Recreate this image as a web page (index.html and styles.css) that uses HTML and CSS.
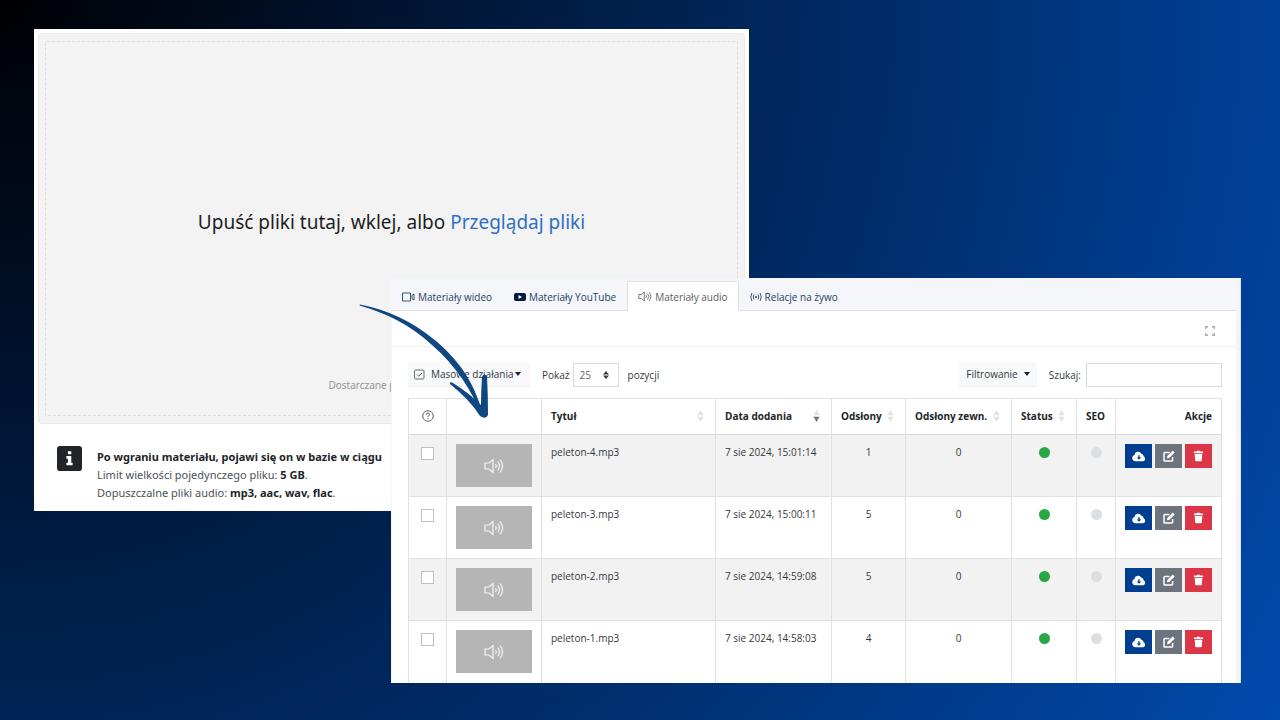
FILE: index.html
```html
<!DOCTYPE html>
<html lang="pl">
<head>
<meta charset="utf-8">
<title>Materiały audio</title>
<link rel="stylesheet" href="styles.css">
</head>
<body>
<svg class="sprite" aria-hidden="true">
  <symbol id="speaker" viewBox="0 0 20 16"><path d="M1 5h4l4-3.500v13L5 11H1zM11.500 6q1.500 2 0 4M13.800 3.700q3.200 4.300 0 8.600M16 1.500q5 6.500 0 13" fill="none" stroke="currentColor" stroke-width="1.200"/></symbol>
  <symbol id="sort" viewBox="0 0 8 14"><path class="up" d="M4 0l3.500 6h-7z"/><path class="down" d="M4 14l3.500-6h-7z"/></symbol>
  <symbol id="cloud" viewBox="0 0 16 12"><path d="M4 11.500a3.700 3.700 0 0 1-1.200-7.200A4.200 4.200 0 0 1 10.700 2.800a2.800 2.800 0 0 1 2.500 3A3 3 0 0 1 12.800 11.500z" fill="#fff"/><path d="M7.200 4.500h1.600V7h1.800L8 9.700 5.400 7h1.800z" fill="#003f8f"/></symbol>
  <symbol id="edit" viewBox="0 0 12 12"><path d="M6.500 2.500H1.800q-.8 0-.8.8v7q0 .8.8.8h7q.8 0 .8-.8V7" fill="none" stroke="#fff" stroke-width="1.500"/><path d="M4 8.300l.3-2.300L9.800.5l1.900 1.900L6.200 7.900z" fill="#fff"/></symbol>
  <symbol id="trash" viewBox="0 0 12 12"><path d="M1 1.200h3L4.600.4h2.800l.6.800h3v1.500H1zM1.800 3.500h8.400l-.6 7.500q0 .8-.9.800H3.300q-.9 0-.9-.8z" fill="#fff"/></symbol>
</svg>
<main class="stage">
  <section class="window upload">
    <div class="drop">
      <div class="drop-area">
        <p class="drop-title">Upuść pliki tutaj, wklej, albo <a href="#">Przeglądaj pliki</a></p>
        <p class="powered">Dostarczane przez <svg width="36" height="9" viewBox="0 0 36 9"><path d="M4.500 0L9 4.500H6.500V9h-4V4.500H0z" fill="#bbb"/></svg></p>
      </div>
    </div>
    <div class="note">
      <svg class="info" viewBox="0 0 24 24" aria-hidden="true"><rect width="24" height="24" rx="3" fill="#212529"/><path d="M10.500 5h3.200v3h-3.200zM9 9.700h4.700V16H15v2.500H9V16h1.500v-3.800H9z" fill="#fff"/></svg>
      <div class="note-text">
        <p><b>Po wgraniu materiału, pojawi się on w bazie w ciągu</b></p>
        <p>Limit wielkości pojedynczego pliku: <b>5 GB</b>.</p>
        <p>Dopuszczalne pliki audio: <b>mp3, aac, wav, flac</b>.</p>
      </div>
    </div>
  </section>

  <section class="window media">
    <nav class="tabs">
      <a class="tab" href="#"><svg width="13" height="10" viewBox="0 0 13 10"><path d="M.5 1h8v8h-8zM10 3.500l2-1.500v6l-2-1.500z" fill="none" stroke="currentColor" stroke-width=".9"/></svg>Materiały wideo</a>
      <a class="tab" href="#"><svg width="12" height="10" viewBox="0 0 12 10"><rect y="1" width="12" height="8" rx="2" fill="#001a44"/><path d="M4.500 3l3.500 2-3.500 2z" fill="#fff"/></svg>Materiały YouTube</a>
      <a class="tab active" href="#"><svg width="14" height="11"><use href="#speaker"/></svg>Materiały audio</a>
      <a class="tab" href="#"><svg width="12" height="10" viewBox="0 0 12 10"><path d="M2 1q-2.500 4 0 8M4 2.500q-1.500 2.500 0 5M10 1q2.500 4 0 8M8 2.500q1.500 2.500 0 5" fill="none" stroke="currentColor" stroke-width=".9"/><circle cx="6" cy="5" r="1" fill="currentColor"/></svg>Relacje na żywo</a>
    </nav>
    <div class="card">
      <div class="card-head">
        <button class="expand" type="button" aria-label="Pełny ekran"><svg width="10" height="10" viewBox="0 0 10 10"><path d="M.7 3V.7H3M7 .7h2.300V3M9.300 7v2.300H7M3 9.300H.7V7" fill="none" stroke="#a3abb3" stroke-width="1.400"/></svg></button>
      </div>
      <div class="card-body">
        <div class="toolbar">
          <button class="btn bulk" type="button"><svg width="11" height="11" viewBox="0 0 11 11"><rect x=".5" y="1" width="9.500" height="9" rx="1" fill="none" stroke="#6b7075"/><path d="M3 5.500l1.700 1.700L8 4" fill="none" stroke="#6b7075"/></svg>Masowe działania<span class="caret"></span></button>
          <label class="count"><span>Pokaż</span>
            <span class="select"><select><option>25</option></select><svg width="6" height="8" viewBox="0 0 6 8"><path d="M3 0l3 3.400H0zM3 8l3-3.400H0z" fill="#343a40"/></svg></span>
            <span class="after">pozycji</span></label>
          <button class="btn filter" type="button">Filtrowanie<span class="caret"></span></button>
          <label class="search">Szukaj:<input type="text"></label>
        </div>
        <table>
          <colgroup><col class="c1"><col class="c2"><col class="c3"><col class="c4"><col class="c5"><col class="c6"><col class="c7"><col class="c8"><col class="c9"></colgroup>
          <thead><tr>
            <th class="mid"><svg class="help" width="12" height="12" viewBox="0 0 12 12"><circle cx="6" cy="6" r="5.300" fill="none" stroke="#5c6268"/><path d="M4.300 4.700Q4.300 3 6 3t1.700 1.500Q7.700 5.300 6 6.200v.8M6 8v1.200" fill="none" stroke="#5c6268"/></svg></th>
            <th></th>
            <th><span class="head">Tytuł<svg class="sort"><use href="#sort"/></svg></span></th>
            <th><span class="head">Data dodania<svg class="sort" viewBox="0 0 8 14"><path d="M4 0l3.500 6h-7z" fill="#dee2e6"/><path d="M4 14l3.500-6h-7z" fill="#6c757d"/></svg></span></th>
            <th><span class="head">Odsłony<svg class="sort"><use href="#sort"/></svg></span></th>
            <th><span class="head">Odsłony zewn.<svg class="sort"><use href="#sort"/></svg></span></th>
            <th><span class="head">Status<svg class="sort"><use href="#sort"/></svg></span></th>
            <th>SEO</th>
            <th class="end">Akcje</th>
          </tr></thead>
          <tbody>
            <tr><td class="mid"><input type="checkbox" aria-label="Zaznacz peleton-4.mp3"></td><td><div class="thumb"><svg width="20" height="16"><use href="#speaker"/></svg></div></td><td>peleton-4.mp3</td><td>7 sie 2024, 15:01:14</td><td class="mid">1</td><td class="mid">0</td><td class="mid"><span class="dot on"></span></td><td class="mid"><span class="dot"></span></td><td><div class="actions"><button class="get" type="button" aria-label="Pobierz"><svg width="14" height="11"><use href="#cloud"/></svg></button><button class="edit" type="button" aria-label="Edytuj"><svg width="12" height="12"><use href="#edit"/></svg></button><button class="del" type="button" aria-label="Usuń"><svg width="11" height="12"><use href="#trash"/></svg></button></div></td></tr>
            <tr><td class="mid"><input type="checkbox" aria-label="Zaznacz peleton-3.mp3"></td><td><div class="thumb"><svg width="20" height="16"><use href="#speaker"/></svg></div></td><td>peleton-3.mp3</td><td>7 sie 2024, 15:00:11</td><td class="mid">5</td><td class="mid">0</td><td class="mid"><span class="dot on"></span></td><td class="mid"><span class="dot"></span></td><td><div class="actions"><button class="get" type="button" aria-label="Pobierz"><svg width="14" height="11"><use href="#cloud"/></svg></button><button class="edit" type="button" aria-label="Edytuj"><svg width="12" height="12"><use href="#edit"/></svg></button><button class="del" type="button" aria-label="Usuń"><svg width="11" height="12"><use href="#trash"/></svg></button></div></td></tr>
            <tr><td class="mid"><input type="checkbox" aria-label="Zaznacz peleton-2.mp3"></td><td><div class="thumb"><svg width="20" height="16"><use href="#speaker"/></svg></div></td><td>peleton-2.mp3</td><td>7 sie 2024, 14:59:08</td><td class="mid">5</td><td class="mid">0</td><td class="mid"><span class="dot on"></span></td><td class="mid"><span class="dot"></span></td><td><div class="actions"><button class="get" type="button" aria-label="Pobierz"><svg width="14" height="11"><use href="#cloud"/></svg></button><button class="edit" type="button" aria-label="Edytuj"><svg width="12" height="12"><use href="#edit"/></svg></button><button class="del" type="button" aria-label="Usuń"><svg width="11" height="12"><use href="#trash"/></svg></button></div></td></tr>
            <tr class="last"><td class="mid"><input type="checkbox" aria-label="Zaznacz peleton-1.mp3"></td><td><div class="thumb"><svg width="20" height="16"><use href="#speaker"/></svg></div></td><td>peleton-1.mp3</td><td>7 sie 2024, 14:58:03</td><td class="mid">4</td><td class="mid">0</td><td class="mid"><span class="dot on"></span></td><td class="mid"><span class="dot"></span></td><td><div class="actions"><button class="get" type="button" aria-label="Pobierz"><svg width="14" height="11"><use href="#cloud"/></svg></button><button class="edit" type="button" aria-label="Edytuj"><svg width="12" height="12"><use href="#edit"/></svg></button><button class="del" type="button" aria-label="Usuń"><svg width="11" height="12"><use href="#trash"/></svg></button></div></td></tr>
          </tbody>
        </table>
      </div>
    </div>
  </section>
  <svg class="arrow" width="132" height="116" viewBox="0 0 132 116" aria-hidden="true"><path d="M1 .5C28 6 52 16 77 37C102 58 117 82 124.500 113L123 113C113 86 97 62 73 41C50 20 27 9 .5 1.500z" fill="#0f4780"/><path d="M91 80Q90 77 94 79Q110 89 122 101Q122 88 123 73Q124 69 128 72Q129 90 129 111Q127 116 121 112Q111 96 91 80z" fill="#0f4780"/></svg>
</main>
</body>
</html>
```

FILE: styles.css
```css
* { box-sizing: border-box; }
body { margin: 0; font: 10px/16px "Open Sans", "Noto Sans", sans-serif; color: #33383d; }
p { margin: 0; }
a { text-decoration: none; }
button, input, select { font: inherit; color: inherit; margin: 0; }
button { border: 0; padding: 0; }
svg { display: block; flex: none; }
.sprite { position: absolute; width: 0; height: 0; }

.stage { position: relative; min-height: 100vh; overflow: hidden; background: radial-gradient(circle farthest-corner at top left, #000003, #004aad); }
.window { position: absolute; background: #fff; }

.upload { left: 34px; top: 29px; width: 715px; font-family: "Noto Sans", sans-serif; padding: 4px 4px 9px; }
.drop { border: 1px solid #eaeaea; border-radius: 4px; background: #f3f3f3; padding: 7px 6px; }
.drop-area { border: 1px dashed #dcdcdc; border-radius: 2px; height: 375px; display: flex; flex-direction: column; align-items: center; }
.drop-title { margin: auto 0; padding-top: 24px; font-size: 19px; line-height: 28px; color: #1e1e1e; }
.drop-title a { color: #2f6fc4; }
.powered { display: flex; align-items: center; gap: 4px; color: #939393; padding-bottom: 22px; }
.note { display: flex; gap: 15px; padding: 22px 19px 0; }
.info { width: 25px; height: 25px; }
.note-text { font-size: 11px; line-height: 18px; padding-top: 2px; color: #4c5157; }
.note-text b { color: #212529; }

.media { left: 391px; top: 278px; width: 850px; background: #f4f5f7; padding-right: 4px; border-right: 1px solid #dfe2e6; }
.tabs { display: flex; padding: 3px 1px 0 0; background: #f4f6f9; height: 33px; border-bottom: 1px solid #dee2e6; }
.tab { display: flex; align-items: center; gap: 3px; height: 30px; padding: 0 10px; color: #25405f; border: 1px solid transparent; border-bottom: 0; }
.tab.active { background: #fff; border-color: #dee2e6; color: #5a6067; }
.card { background: #fff; margin-left: 1px; }
.card-head { height: 36px; display: flex; align-items: center; justify-content: flex-end; padding: 4px 21px 0 0; border-bottom: 1px solid #f2f2f3; }
.expand { background: none; }
.card-body { padding: 15px 14px 0 16px; }
.toolbar { display: flex; align-items: center; height: 25px; margin-bottom: 11px; }
.btn { display: flex; align-items: center; gap: 6px; height: 25px; background: #f8f9fa; border-bottom: 1px solid #edeef0; white-space: nowrap; }
.bulk { width: 122px; padding-left: 6px; }
.bulk .caret { margin-left: -4px; }
.caret { border: 3px solid transparent; border-top: 4px solid #212529; border-bottom: 0; }
.count { display: flex; align-items: center; gap: 3px; padding-left: 12px; }
.select { display: flex; align-items: center; width: 46px; height: 24px; border: 1px solid #d5dbe0; padding: 0 9px 0 6px; }
.select select { appearance: none; border: 0; background: none; padding: 0; flex: 1; min-width: 0; color: #5d6369; }
.after { padding-left: 6px; }
.filter { margin-left: auto; padding: 0 7px; }
.search { display: flex; align-items: center; gap: 5px; padding-left: 12px; }
.search input { width: 136px; height: 24px; border: 1px solid #d5dbe0; background: #fff; padding: 0 6px; }

table { width: 100%; table-layout: fixed; border-collapse: collapse; }
.c1 { width: 38px; } .c2 { width: 95px; } .c4 { width: 116px; } .c5 { width: 74px; }
.c6 { width: 106px; } .c7 { width: 65px; } .c8 { width: 39px; } .c9 { width: 106px; }
th, td { border: 1px solid #dee2e6; padding: 9px; text-align: left; vertical-align: top; white-space: nowrap; }
th { height: 36px; color: #212529; font-weight: 700; border-bottom-color: #d6dade; }
td { height: 62px; padding-bottom: 8px; }
tbody tr:nth-child(odd) { background: #f2f2f2; }
.last td { border-bottom: 0; }
th.end { text-align: right; }
.mid { text-align: center; }
.help { margin: 2px auto 0; }
.head { display: flex; justify-content: space-between; align-items: center; }
.sort { width: 7px; height: 12px; margin-right: 2px; fill: #dee2e6; }
td input { appearance: none; display: block; width: 13px; height: 13px; margin: 3px auto 0; border: 1px solid #b9c1c9; background: #fff; }
.thumb { height: 43px; background: #b5b5b5; color: #f4f4f4; display: grid; place-items: center; }
.dot { display: block; width: 11px; height: 11px; margin: 3px auto 0; border-radius: 50%; background: #dbdfe2; }
.dot.on { background: #28a745; }
.actions { display: flex; justify-content: flex-end; gap: 3px; }
.actions button { width: 27px; height: 24px; display: grid; place-items: center; }
.get { background: #003f8f; }
.edit { background: #6c757d; }
.del { background: #dc3545; }

.arrow { position: absolute; left: 359px; top: 304px; }
```
